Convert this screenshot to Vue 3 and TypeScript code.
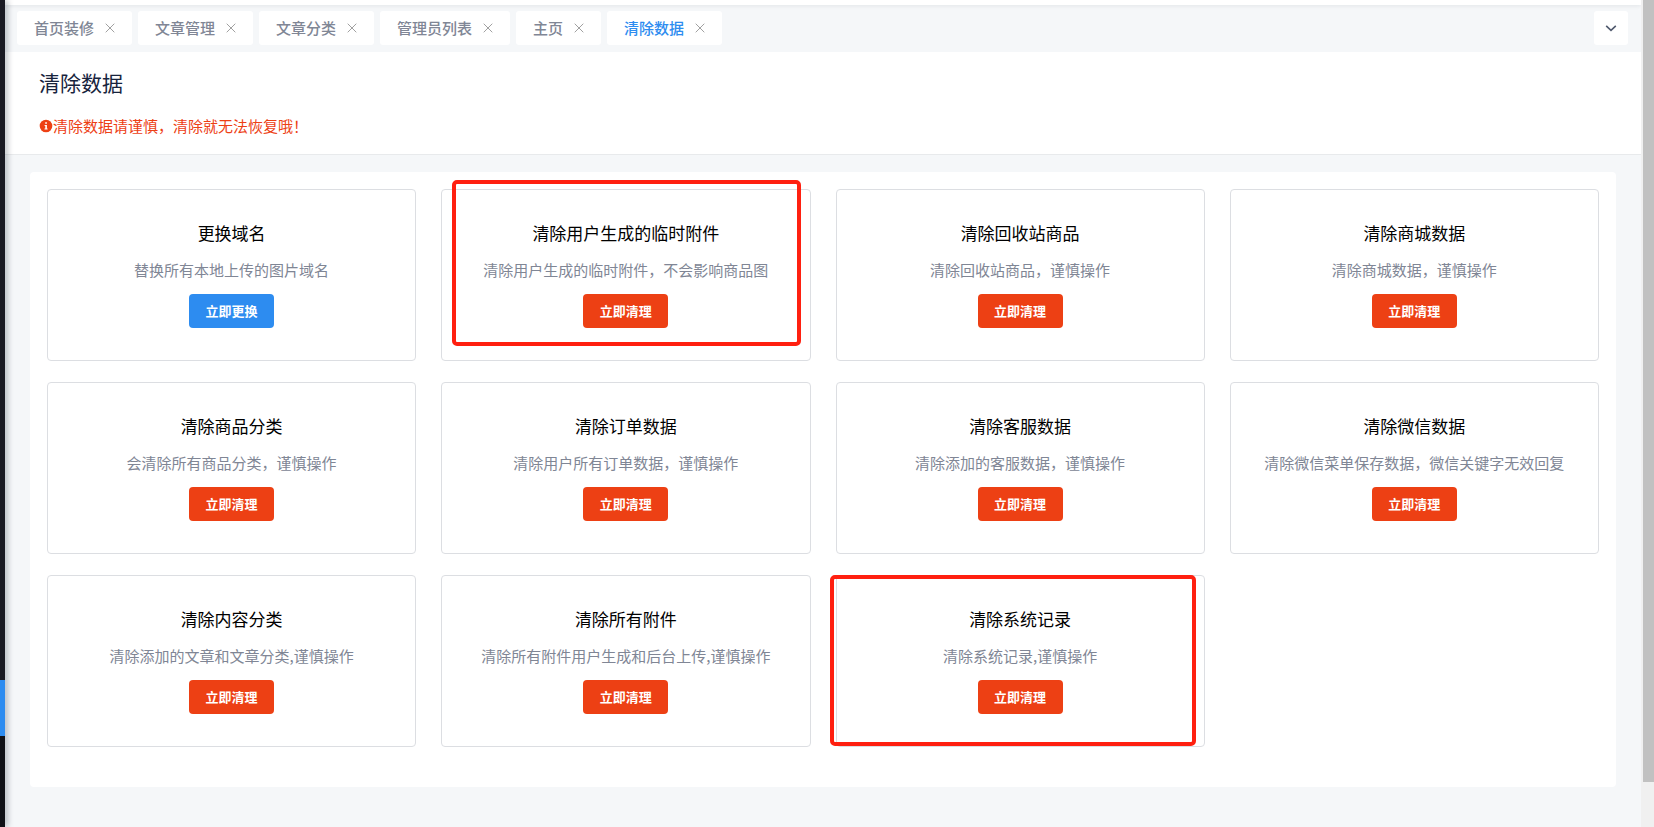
<script setup lang="ts">
interface Tab {
  title: string
  active?: boolean
}

interface Task {
  title: string
  desc: string
  action: string
  primary?: boolean
  mark?: string
}

const tabs: Tab[] = [
  { title: '首页装修' },
  { title: '文章管理' },
  { title: '文章分类' },
  { title: '管理员列表' },
  { title: '主页' },
  { title: '清除数据', active: true },
]

const tasks: Task[] = [
  { title: '更换域名', desc: '替换所有本地上传的图片域名', action: '立即更换', primary: true },
  { title: '清除用户生成的临时附件', desc: '清除用户生成的临时附件，不会影响商品图', action: '立即清理', mark: 'mark-inner' },
  { title: '清除回收站商品', desc: '清除回收站商品，谨慎操作', action: '立即清理' },
  { title: '清除商城数据', desc: '清除商城数据，谨慎操作', action: '立即清理' },
  { title: '清除商品分类', desc: '会清除所有商品分类，谨慎操作', action: '立即清理' },
  { title: '清除订单数据', desc: '清除用户所有订单数据，谨慎操作', action: '立即清理' },
  { title: '清除客服数据', desc: '清除添加的客服数据，谨慎操作', action: '立即清理' },
  { title: '清除微信数据', desc: '清除微信菜单保存数据，微信关键字无效回复', action: '立即清理' },
  { title: '清除内容分类', desc: '清除添加的文章和文章分类,谨慎操作', action: '立即清理' },
  { title: '清除所有附件', desc: '清除所有附件用户生成和后台上传,谨慎操作', action: '立即清理' },
  { title: '清除系统记录', desc: '清除系统记录,谨慎操作', action: '立即清理', mark: 'mark-outer' },
]
</script>

<template>
  <div class="layout">
    <aside class="sider">
      <div class="sider-menu"></div>
      <div class="sider-active"></div>
      <div class="sider-sub"></div>
    </aside>

    <div class="main">
      <div class="topbar"></div>
      <nav class="tabs">
        <div v-for="tab in tabs" :key="tab.title" class="tab" :class="{ active: tab.active }">
          <a href="#" class="tab-link">{{ tab.title }}</a>
          <button type="button" class="tab-close" :aria-label="'关闭' + tab.title">
            <svg viewBox="0 0 10 10" width="10" height="10"><path d="M.7.7 9.3 9.3M9.3.7.7 9.3" /></svg>
          </button>
        </div>
        <button type="button" class="tabs-more" aria-label="更多">
          <svg viewBox="0 0 12 8" width="12" height="8"><path d="M1.2 1.8 6 6.400 10.800 1.800" /></svg>
        </button>
      </nav>

      <header class="page-header">
        <h1>清除数据</h1>
        <p class="warning">
          <svg viewBox="0 0 14 14" width="14" height="14">
            <circle cx="7" cy="7" r="6.300" fill="#ed4014" />
            <path d="M6.200 3.200h1.700v1.600H6.200zM5.600 5.900h2.300v3.700h.7v1H5.500v-1h.8V6.900h-.7z" fill="#fff" />
          </svg>
          <span>清除数据请谨慎，清除就无法恢复哦！</span>
        </p>
      </header>

      <main class="panel">
        <section v-for="task in tasks" :key="task.title" class="card">
          <h2>{{ task.title }}</h2>
          <p>{{ task.desc }}</p>
          <button type="button" class="action" :class="{ primary: task.primary }">{{ task.action }}</button>
          <span v-if="task.mark" class="mark" :class="task.mark"></span>
        </section>
      </main>
    </div>

    <div class="scrollbar"><div class="thumb"></div></div>
  </div>
</template>

<style>
body {
  margin: 0;
  background: #f5f7f9;
}
</style>

<style scoped>
.layout {
  display: flex;
  min-height: 100vh;
  font-family: "Noto Sans CJK SC", sans-serif;
  font-size: 15px;
  color: #808695;
  background: #f5f7f9;
}

.sider {
  display: flex;
  flex-direction: column;
  flex: 0 0 5px;
  z-index: 1;
  box-shadow: 2px 0 6px rgba(0, 21, 41, 0.35);
}

.sider-menu {
  flex: 680 0 0;
  background: #191a23;
}

.sider-active {
  flex: 56 0 0;
  background: #2d8cf0;
}

.sider-sub {
  flex: 91 0 0;
  background: #101117;
}

.main {
  flex: 1;
  min-width: 0;
}

.topbar {
  height: 5px;
  background: #fff;
  box-shadow: 0 1px 4px rgba(0, 21, 41, 0.08);
}

.tabs {
  display: flex;
  gap: 6px;
  padding: 6px 13px 7px 12px;
}

.tab {
  display: flex;
  align-items: center;
  gap: 10px;
  height: 34px;
  padding: 0 17px;
  box-sizing: border-box;
  border-radius: 3px;
  background: #fff;
}

.tab-link {
  line-height: 34px;
  color: #808695;
  font-weight: 500;
  text-decoration: none;
  white-space: nowrap;
}

.tab.active .tab-link {
  color: #2d8cf0;
}

.tab-close,
.tabs-more {
  display: flex;
  align-items: center;
  justify-content: center;
  padding: 0;
  border: 0;
  background: none;
  cursor: pointer;
}

.tab-close {
  width: 11px;
}

.tab-close path {
  fill: none;
  stroke: #a0a0a0;
  stroke-width: 1;
}

.tabs-more {
  width: 34px;
  height: 34px;
  margin-left: auto;
  border-radius: 3px;
  background: #fff;
}

.tabs-more path {
  fill: none;
  stroke: #515a6e;
  stroke-width: 1.6;
}

.page-header {
  padding: 15px 34px 17px;
  border-bottom: 1px solid #e8eaec;
  background: #fff;
}

h1 {
  margin: 0;
  font-size: 21px;
  line-height: 30px;
  font-weight: 400;
  color: #17233d;
}

.warning {
  display: flex;
  align-items: center;
  margin: 17px 0 0;
  line-height: 23px;
  color: #ed4014;
}

.panel {
  display: grid;
  grid-template-columns: repeat(4, minmax(0, 1fr));
  gap: 21px 25px;
  margin: 17px 25px 40px;
  padding: 17px 17px 40px;
  border-radius: 4px;
  background: #fff;
}

.card {
  position: relative;
  display: flex;
  flex-direction: column;
  align-items: center;
  padding: 30px 8px 32px;
  border: 1px solid #dcdee2;
  border-radius: 4px;
  text-align: center;
}

.card h2 {
  margin: 0;
  font-size: 17px;
  line-height: 25px;
  font-weight: 400;
  color: #000;
}

.card p {
  margin: 14px 0 13px;
  line-height: 22px;
}

.action {
  height: 34px;
  padding: 0 16px 2px;
  border: 0;
  min-width: 85px;
  border-radius: 4px;
  background: #ed4014;
  color: #fff;
  font-family: inherit;
  font-size: 13px;
  font-weight: 700;
  cursor: pointer;
}

.action.primary {
  background: #2d8cf0;
}

.mark {
  position: absolute;
  border: 4px solid #ff2010;
  border-radius: 5px;
  pointer-events: none;
}

.mark-inner {
  inset: -10px 9px 14px 10px;
}

.mark-outer {
  inset: -1px 8px 0 -7px;
}

.scrollbar {
  flex: 0 0 11px;
  padding-left: 2px;
  background: #f0f0f0;
}

.thumb {
  height: 782px;
  background: #c1c1c1;
}
</style>
